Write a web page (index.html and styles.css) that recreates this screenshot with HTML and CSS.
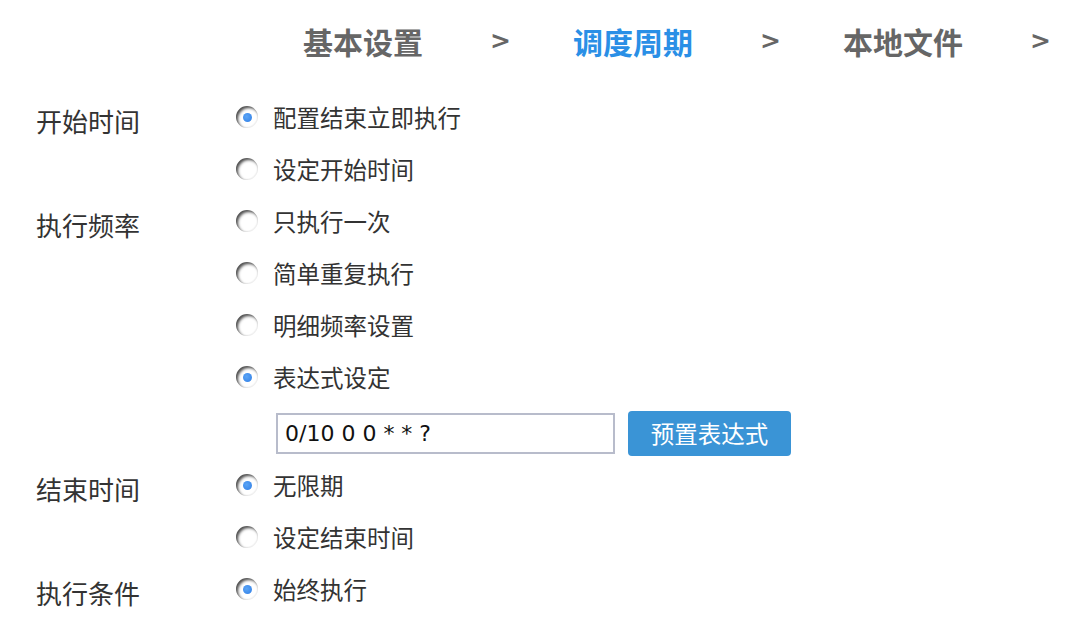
FILE: index.html
```html
<!DOCTYPE html>
<html lang="zh-CN">
<head>
  <meta charset="UTF-8" />
  <meta name="viewport" content="width=device-width, initial-scale=1.0"/>
  <title>调度周期</title>
  <link rel="stylesheet" href="styles.css">
</head>
<body>

  <nav class="steps">
    <span class="step">基本设置</span><span class="arrow">&gt;</span>
    <span class="step active">调度周期</span><span class="arrow">&gt;</span>
    <span class="step">本地文件</span><span class="arrow">&gt;</span>
  </nav>

  <form class="schedule">
    <div class="label">开始时间</div>
    <div class="options">
      <label class="option"><span class="radio checked"></span>配置结束立即执行</label>
      <label class="option"><span class="radio"></span>设定开始时间</label>
    </div>

    <div class="label">执行频率</div>
    <div class="options">
      <label class="option"><span class="radio"></span>只执行一次</label>
      <label class="option"><span class="radio"></span>简单重复执行</label>
      <label class="option"><span class="radio"></span>明细频率设置</label>
      <label class="option"><span class="radio checked"></span>表达式设定</label>
      <div class="expr-row">
        <input class="expr" type="text" value="0/10 0 0 * * ?">
        <button class="btn" type="button">预置表达式</button>
      </div>
    </div>

    <div class="label">结束时间</div>
    <div class="options">
      <label class="option"><span class="radio checked"></span>无限期</label>
      <label class="option"><span class="radio"></span>设定结束时间</label>
    </div>

    <div class="label">执行条件</div>
    <div class="options">
      <label class="option"><span class="radio checked"></span>始终执行</label>
    </div>
  </form>

</body>
</html>
```

FILE: styles.css
```css
:root {
  --text: #333333;
  --muted: #666666;
  --blue: #2a8fe6;
  --btn: #3a94d6;
  --border: #b8bccb;
}

* {
  box-sizing: border-box;
  margin: 0;
  padding: 0;
}

body {
  background: #ffffff;
  color: var(--text);
  font-family: 'Noto Sans CJK SC', 'Noto Sans', sans-serif;
  overflow: hidden;
  height: 100vh;
}

.steps {
  display: grid;
  grid-template-columns: repeat(3, 187px 83px);
  padding: 20px 0 0 303px;
  height: 91px;
  line-height: 42px;
  font-weight: bold;
  color: var(--muted);
}

.step {
  font-size: 30px;
}

.step.active {
  color: var(--blue);
}

.arrow {
  font-family: 'DejaVu Sans', sans-serif;
  font-size: 25px;
}

.schedule {
  display: grid;
  grid-template-columns: 200px 1fr;
  padding-left: 36px;
}

.label {
  font-size: 26px;
  line-height: 52px;
  padding-top: 4px;
  color: var(--text);
}

.options {
  display: flex;
  flex-direction: column;
}

.option {
  display: flex;
  align-items: center;
  height: 52px;
  gap: 15px;
  font-size: 23.5px;
  color: var(--text);
}

.radio {
  position: relative;
  width: 22px;
  height: 22px;
  border-radius: 50%;
  background: #ffffff;
  box-shadow: inset 2px 2px 3px rgba(0, 0, 0, 0.7), inset -1px -1px 1px rgba(0, 0, 0, 0.06);
  flex-shrink: 0;
}

.radio.checked::after {
  content: '';
  position: absolute;
  left: 7px;
  top: 7px;
  width: 9px;
  height: 9px;
  border-radius: 50%;
  background: radial-gradient(circle at 40% 40%, #5aa4f5, #2f7ee6);
}

.expr-row {
  display: flex;
  align-items: center;
  height: 56px;
  gap: 13px;
  padding-left: 40px;
  padding-top: 4px;
}

.expr {
  width: 339px;
  height: 41px;
  border: 2px solid var(--border);
  padding: 0 7px;
  font-family: 'DejaVu Sans', sans-serif;
  font-size: 22px;
  color: #111111;
  outline: none;
}

.btn {
  width: 163px;
  height: 45px;
  border: none;
  border-radius: 4px;
  background: var(--btn);
  color: #ffffff;
  font-family: 'Noto Sans CJK SC', 'Noto Sans', sans-serif;
  font-size: 23.5px;
}
```
